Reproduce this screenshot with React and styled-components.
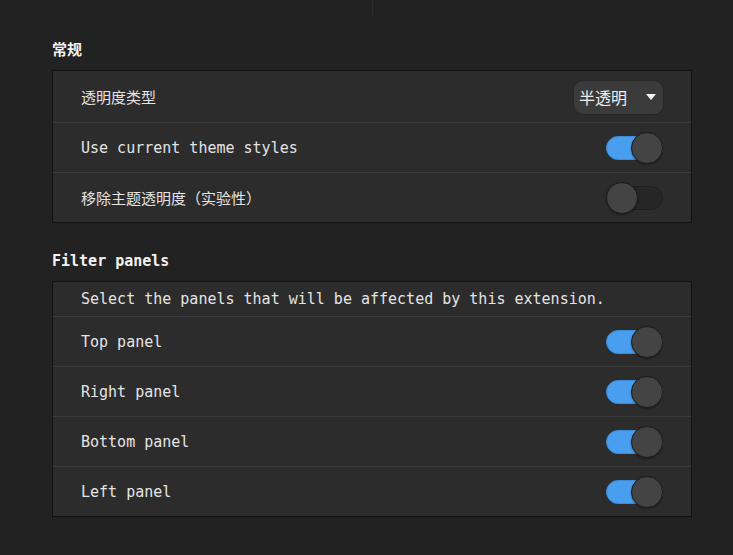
import React from 'react';
import styled, { createGlobalStyle } from 'styled-components';

const GlobalStyle = createGlobalStyle`
  html, body {
    margin: 0;
    padding: 0;
    background: #222222;
  }
  body {
    font-family: 'DejaVu Sans Mono', 'Noto Sans CJK SC', monospace;
    color: #e6e6e6;
  }
`;

const Page = styled.div`
  width: 733px;
  height: 555px;
  background: #222222;
  overflow: hidden;
`;

const TopStrip = styled.div`
  width: 372px;
  height: 16px;
  border-right: 1px solid #2c2c2c;
`;

const Content = styled.div`
  width: 640px;
  margin: 24px 0 0 52px;
`;

const Section = styled.section`
  & + & {
    margin-top: 28px;
  }
`;

const Heading = styled.h2`
  margin: 0 0 10px;
  font-size: 15px;
  line-height: 20px;
  font-weight: bold;
  color: #f2f2f2;
  font-family: 'DejaVu Sans Mono', 'Noto Sans CJK SC', monospace;
`;

const Panel = styled.div`
  background: #2c2c2c;
  border: 1px solid #121212;
`;

const Row = styled.div`
  display: flex;
  align-items: center;
  justify-content: space-between;
  height: ${(p) => p.$h || 50}px;
  box-sizing: border-box;
  padding: 0 28px;
  & + & {
    border-top: 1px solid #3a3a3a;
  }
`;

const Label = styled.span`
  font-size: 15px;
  color: #e4e4e4;
  font-family: 'DejaVu Sans Mono', 'Noto Sans CJK SC', monospace;
  white-space: pre;
`;

const Dropdown = styled.button`
  display: flex;
  align-items: center;
  justify-content: space-between;
  width: 89px;
  height: 33px;
  box-sizing: border-box;
  padding: 0 7px 0 5px;
  border: none;
  border-radius: 9px;
  background: #3b3b3b;
  box-shadow: 0 0 0 1px #272727;
  color: #eeeeee;
  font-family: 'Noto Sans CJK SC', sans-serif;
  font-size: 16px;
  margin-top: 1px;
`;

const Caret = styled.span`
  width: 0;
  height: 0;
  border-left: 5px solid transparent;
  border-right: 5px solid transparent;
  border-top: 6px solid #f4f4f4;
`;

const Switch = styled.span`
  position: relative;
  display: inline-block;
  width: 57px;
  height: 32px;
`;

const Track = styled.span`
  position: absolute;
  left: 0;
  right: 0;
  top: 4px;
  height: 24px;
  box-sizing: border-box;
  border-radius: 12px;
  background: ${(p) => (p.$on ? '#4a9ef0' : '#262626')};
  border: 1px solid ${(p) => (p.$on ? '#3d8ad6' : '#1f1f1f')};
`;

const Knob = styled.span`
  position: absolute;
  top: 0;
  ${(p) => (p.$on ? 'right: 0;' : 'left: 0;')}
  width: 32px;
  height: 32px;
  box-sizing: border-box;
  border-radius: 50%;
  background: #444444;
  border: 1px solid #1c1c1c;
  box-shadow: 0 1px 2px rgba(0, 0, 0, 0.35);
`;

function Toggle({ on }) {
  return (
    <Switch>
      <Track $on={on} />
      <Knob $on={on} />
    </Switch>
  );
}

const panels = ['Top panel', 'Right panel', 'Bottom panel', 'Left panel'];

export default function App() {
  return (
    <Page>
      <GlobalStyle />
      <TopStrip />
      <Content>
        <Section>
          <Heading>常规</Heading>
          <Panel>
            <Row $h={51}>
              <Label>透明度类型</Label>
              <Dropdown>
                半透明
                <Caret />
              </Dropdown>
            </Row>
            <Row>
              <Label>Use current theme styles</Label>
              <Toggle on />
            </Row>
            <Row>
              <Label>移除主题透明度（实验性）</Label>
              <Toggle on={false} />
            </Row>
          </Panel>
        </Section>
        <Section>
          <Heading>Filter panels</Heading>
          <Panel>
            <Row $h={34}>
              <Label>Select the panels that will be affected by this extension.</Label>
            </Row>
            {panels.map((name) => (
              <Row key={name}>
                <Label>{name}</Label>
                <Toggle on />
              </Row>
            ))}
          </Panel>
        </Section>
      </Content>
    </Page>
  );
}
